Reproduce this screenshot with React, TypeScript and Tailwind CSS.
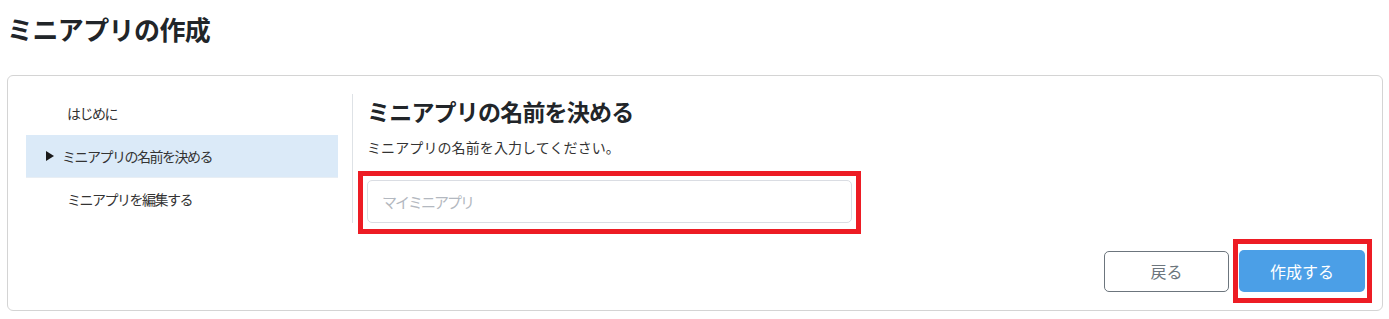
import React from 'react';

const steps = ['はじめに', 'ミニアプリの名前を決める', 'ミニアプリを編集する'];
const activeStep = 1;

function Highlight({ className }: { className: string }) {
  // annotation frame drawn over the screenshot
  return <div className={`pointer-events-none absolute border-[5px] border-[#ed1c24] ${className}`} />;
}

export default function App() {
  return (
    <div className="h-[319px] w-[1389px] bg-white font-['Noto_Sans_CJK_JP','Noto_Sans',sans-serif] text-[#212529]">
      <h1 className="px-[7px] pt-[12px] text-[26px] font-bold leading-[33px] tracking-[-0.6px]">ミニアプリの作成</h1>

      <div className="ml-[7px] mt-[30px] h-[236px] w-[1376px] rounded-[6px] border border-[#d4d4d4] pb-4 pl-[18px] pr-[17px] pt-4">
        <div className="flex">
          <nav className="w-[312px]">
            {steps.map((label, i) => {
              const active = i === activeStep;
              return (
                <div
                  key={label}
                  className={
                    active
                      ? 'flex h-[43px] items-center border-b border-[#e8eef4] bg-[#dbeaf8] pl-[20px] text-[14px] tracking-[-1.5px] text-[#333]'
                      : 'flex h-[43px] items-center pl-[41px] text-[14px] tracking-[-1.5px] text-[#333]'
                  }
                >
                  {active && (
                    <svg width="8" height="10" viewBox="0 0 8 10" className="mr-[8px] shrink-0">
                      <path d="M0 0 L8 5 L0 10 Z" fill="#1a1a1a" />
                    </svg>
                  )}
                  {label}
                </div>
              );
            })}
          </nav>

          <section className="ml-[14px] mt-[2px] h-[129px] border-l border-[#dee2e6] pl-[14px]">
            <h2 className="pt-[3px] text-[23px] font-bold leading-[28px] tracking-[-0.8px]">ミニアプリの名前を決める</h2>
            <p className="mt-[12px] text-[14px] leading-[20px] tracking-[0.1px] text-[#333]">ミニアプリの名前を入力してください。</p>
            <div className="relative mt-[23px] w-[485px]">
              <input
                type="text"
                placeholder="マイミニアプリ"
                className="block h-[43px] w-full rounded-[5px] border border-[#dadde3] bg-white pl-[14px] text-[15px] tracking-[-2px] outline-none placeholder:text-[#b3b8c0]"
              />
              <Highlight className="-bottom-[11px] -left-[9px] -right-[9px] -top-[9px]" />
            </div>
          </section>
        </div>

        <div className="mt-[27px] flex items-center justify-end gap-[10px]">
          <button className="h-[41px] w-[125px] rounded-[5px] border border-[#6c757d] bg-white text-[16px] text-[#6c757d]">
            戻る
          </button>
          <div className="relative">
            <button className="block h-[42px] w-[126px] rounded-[5px] bg-[#4b9fe7] text-[16px] text-white">作成する</button>
            <Highlight className="-bottom-[11px] -left-[6px] -right-[7px] -top-[11px]" />
          </div>
        </div>
      </div>
    </div>
  );
}
